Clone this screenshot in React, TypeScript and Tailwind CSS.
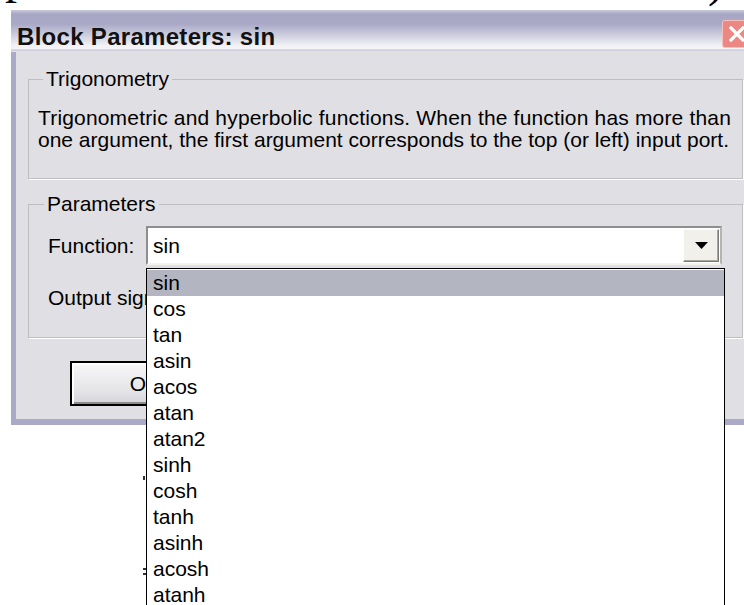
const functions = [
  "sin",
  "cos",
  "tan",
  "asin",
  "acos",
  "atan",
  "atan2",
  "sinh",
  "cosh",
  "tanh",
  "asinh",
  "acosh",
  "atanh",
];

function ComboArrow() {
  return (
    <div className="flex h-[33px] w-[36px] items-center justify-center border border-t-[#fbfbf8] border-l-[#fbfbf8] border-r-[#7b7b7b] border-b-[#7b7b7b] bg-[#f1f0ea] shadow-[inset_-1px_-1px_0_#a7a7a0]">
      <svg width="13" height="7" viewBox="0 0 13 7">
        <path d="M0 0h13L6.5 7z" fill="#000" />
      </svg>
    </div>
  );
}

function Button({ label, primary }: { label: string; primary?: boolean }) {
  return (
    <button
      className={
        "h-[45px] w-[150px] bg-[linear-gradient(180deg,#f7f7f7,#e4e4e8_70%,#d3d3d9)] leading-[20px] shadow-[inset_2px_2px_0_#fff,inset_-2px_-2px_0_#8c8c8c] " +
        (primary ? "border-2 border-black" : "border border-[#6f6f6f]")
      }
    >
      {label}
    </button>
  );
}

export default function App() {
  return (
    <div className="relative h-[605px] w-[744px] overflow-hidden bg-white font-['Liberation_Sans',Arial,sans-serif] text-[21px] text-black">
      {/* document text behind the dialog, only its descenders peek out */}
      <div className="relative h-[10px] overflow-hidden font-['Liberation_Serif','Times_New_Roman',serif] text-[48px] leading-[48px]">
        <span className="absolute left-[5px] top-[-47px]">p</span>
        <span className="absolute left-[361px] top-[-50px]">g</span>
        <span className="absolute left-[708px] top-[-44px]">)</span>
      </div>

      {/* dialog */}
      <div className="ml-[11px] w-[760px]">
        <div className="flex h-[42px] items-start bg-[linear-gradient(180deg,#cacadc_0px,#a7a7c5_4px,#a9a9c6_14px,#f2f2f7_36px,#f3f3f7_39px,#c4c4d4_40px,#e9e9ee_42px)]">
          <span className="pl-[6px] pt-[15px] text-[24px] font-bold leading-[24px] tracking-[0.3px] text-[#111]">
            Block Parameters: sin
          </span>
          <div className="ml-auto mr-[19px] mt-[10px] flex h-[28px] w-[30px] items-center justify-center rounded-[3px] border border-[#f7c1bd] bg-[#ec8883]">
            <svg width="16" height="16" viewBox="0 0 16 16">
              <path d="M2 2l12 12M14 2L2 14" stroke="#fff" strokeWidth="3.2" strokeLinecap="square" />
            </svg>
          </div>
        </div>

        <div className="border-b-[6px] border-l-[5px] border-[#aaaac8] bg-[#e0dfe3] pb-[13px] pl-[12px] pt-[17px]">
          <fieldset className="w-[715px] border border-[#bdbdc2] pb-[27px] pl-[9px] pr-[2px] pt-[18px] shadow-[1px_1px_0_#fff]">
            <legend className="ml-[5px] px-[3px] leading-[20px]">Trigonometry</legend>
            <div className="whitespace-nowrap leading-[22px]">
              <p className="tracking-[0.17px]">
                Trigonometric and hyperbolic functions. When the function has more than
              </p>
              <p>one argument, the first argument corresponds to the top (or left) input port.</p>
            </div>
          </fieldset>

          <fieldset className="mt-[15px] w-[715px] border border-[#bdbdc2] pb-[20px] pl-[19px] pt-[12px] shadow-[1px_1px_0_#fff]">
            <legend className="ml-[-4px] px-[3px] leading-[20px]">Parameters</legend>

            <div className="flex items-center">
              <span className="w-[98px] whitespace-nowrap leading-[22px]">Function:</span>
              <div className="relative z-10">
                <div className="flex h-[39px] w-[576px] items-center border-2 border-b-[#f4f3ee] border-l-[#8e8e8e] border-r-[#b5b5b0] border-t-[#8e8e8e] bg-white pl-[5px] pr-[1px]">
                  <span className="leading-[22px]">sin</span>
                  <div className="ml-auto">
                    <ComboArrow />
                  </div>
                </div>

                {/* open drop-down list */}
                <ul className="absolute left-0 top-[42px] w-[579px] border border-black bg-white pt-[1px]">
                  {functions.map((fn, i) => (
                    <li
                      key={fn}
                      className={
                        "h-[26px] pl-[6px] leading-[26px] " + (i === 0 ? "bg-[#b3b5c1]" : "")
                      }
                    >
                      {fn}
                    </li>
                  ))}
                </ul>
              </div>
            </div>

            <div className="mt-[13px] flex items-center">
              <span className="w-[98px] overflow-hidden whitespace-nowrap leading-[22px]">Output signal type:</span>
              <div className="h-[39px] w-[576px] border-2 border-[#8e8e8e] bg-white" />
            </div>
          </fieldset>

          <div className="ml-[42px] mt-[23px] flex gap-[10px]">
            <Button label="OK" primary />
            <Button label="Cancel" />
            <Button label="Help" />
            <Button label="Apply" />
          </div>
        </div>
      </div>

      {/* stray marks of the page text below the dialog */}
      <span className="absolute left-[143px] top-[476px] h-[4px] w-[2px] bg-[#333]" />
      <span className="absolute left-[143px] top-[568px] h-[2px] w-[3px] bg-[#333]" />
      <span className="absolute left-[143px] top-[573px] h-[2px] w-[3px] bg-[#333]" />
    </div>
  );
}
